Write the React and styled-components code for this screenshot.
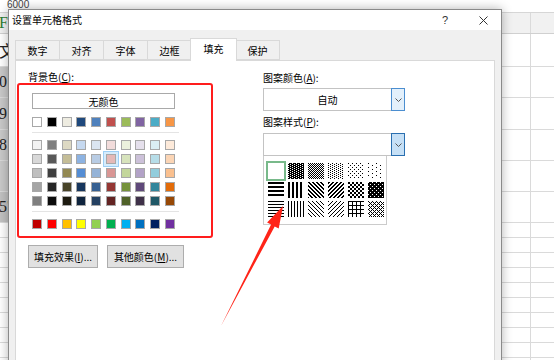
import React from 'react';
import styled, { createGlobalStyle } from 'styled-components';

const GlobalStyle = createGlobalStyle`
  html, body { margin: 0; padding: 0; }
  body { font-family: "Noto Sans CJK SC", "Noto Sans", sans-serif; background: #fff; }
`;

const Page = styled.div`
  position: relative;
  width: 554px;
  height: 360px;
  overflow: hidden;
  background: #fff;
`;

/* ---------- spreadsheet behind the dialog ---------- */
const Sheet = styled.div`
  display: flex;
  flex-direction: column;
`;
const FormulaBar = styled.div`
  height: 13px;
  box-sizing: border-box;
  border-bottom: 1px solid #d6d6d6;
  padding-left: 7px;
  font-family: "Liberation Sans", sans-serif;
  font-size: 10px;
  line-height: 10px;
  color: #444;
`;
const SheetRow = styled.div`
  display: flex;
  height: ${p => p.$h}px;
  box-sizing: border-box;
  border-bottom: 1px solid ${p => p.$line || '#dadada'};
`;
const FirstCell = styled.div`
  width: 60px;
  background: ${p => p.$fill || '#fff'};
  font-family: "Liberation Serif", "Noto Sans CJK SC", serif;
  font-size: 16px;
  color: ${p => p.$color || '#222'};
  display: flex;
  align-items: center;
  text-indent: -1px;
  white-space: nowrap;
  overflow: hidden;
`;
const MiddleCell = styled.div`
  width: 469px;
  border-left: 1px solid #dadada;
  background: ${p => p.$fill || '#fff'};
`;
const LastCell = styled.div`
  flex: 1;
  border-left: 1px solid #dadada;
  background: ${p => p.$fill || '#fff'};
`;

const sheetRows = [
  { h: 21, fill: '#f1f1f1', rfill: '#f1f1f1', text: 'F', color: '#2e7d32', line: '#d0d0d0' },
  { h: 33, text: '文' },
  { h: 31, fill: '#c9c9c9', text: '0' },
  { h: 32, fill: '#c9c9c9', text: '9' },
  { h: 31, fill: '#c9c9c9', text: '8' },
  { h: 31, fill: '#c9c9c9', text: '' },
  { h: 31, fill: '#c2c2c2', text: '57' },
  ...Array.from({ length: 10 }, () => ({ h: 15 })),
];

/* ---------- dialog window ---------- */
const Dialog = styled.div`
  position: absolute;
  left: 8px;
  top: 9px;
  width: 494px;
  height: 400px;
  box-sizing: border-box;
  border: 1px solid #8a8a8a;
  background: #f0f0f0;
  box-shadow: 0 0 10px rgba(0, 0, 0, 0.3);
  display: flex;
  flex-direction: column;
  font-size: 10px;
  color: #000;
`;
const TitleBar = styled.div`
  height: 20px;
  background: #fff;
  display: flex;
  align-items: center;
  padding-left: 3px;
`;
const Title = styled.div`
  flex: 1;
  font-size: 10px;
  line-height: 12px;
`;
const TitleButton = styled.div`
  width: ${p => p.$w}px;
  height: 20px;
  display: flex;
  align-items: center;
  justify-content: center;
  font-family: "Liberation Sans", sans-serif;
  font-size: 11px;
  color: #333;
`;
const Body = styled.div`
  flex: 1;
  display: flex;
  flex-direction: column;
  padding: 8px 6px 0 6px;
`;
const TabRow = styled.div`
  display: flex;
  align-items: flex-start;
  height: 22px;
`;
const Tab = styled.div`
  width: ${p => (p.$active ? 47 : 45)}px;
  height: ${p => (p.$active ? 23 : 20)}px;
  margin-top: ${p => (p.$active ? 0 : 2)}px;
  margin-left: ${p => (p.$first ? 0 : p.$active ? -2 : -1)}px;
  margin-right: ${p => (p.$active ? -1 : 0)}px;
  box-sizing: border-box;
  border: 1px solid #d9d9d9;
  border-bottom: ${p => (p.$active ? 'none' : '1px solid #d9d9d9')};
  background: ${p => (p.$active ? '#fff' : '#f0f0f0')};
  position: relative;
  z-index: ${p => (p.$active ? 2 : 1)};
  display: flex;
  align-items: center;
  justify-content: center;
  padding-bottom: ${p => (p.$active ? 3 : 0)}px;
  font-size: 10px;
`;
const Panel = styled.div`
  flex: 1;
  width: 480px;
  box-sizing: border-box;
  border: 1px solid #d9d9d9;
  background: #fff;
  display: flex;
  align-items: flex-start;
`;

/* ---------- left: background colour ---------- */
const LeftCol = styled.div`
  margin-left: 1px;
  width: 196px;
  padding-top: 9px;
  display: flex;
  flex-direction: column;
`;
const Label = styled.div`
  padding-left: ${p => p.$indent || 0}px;
  margin-top: ${p => p.$mt || 0}px;
  font-size: 10px;
  line-height: 13px;
  height: 13px;
  white-space: nowrap;
`;
const RedBox = styled.div`
  width: 196px;
  height: 155px;
  box-sizing: border-box;
  border: 2px solid #ff1d1d;
  border-radius: 3px;
  padding: 8px 0 0 13px;
  display: flex;
  flex-direction: column;
`;
const NoColorButton = styled.div`
  width: 143px;
  height: 16px;
  box-sizing: border-box;
  border: 1px solid #a9a9a9;
  background: #fff;
  display: flex;
  align-items: center;
  justify-content: center;
  font-size: 10px;
`;
const SwatchRow = styled.div`
  width: 143px;
  display: flex;
  justify-content: space-between;
  margin-top: ${p => p.$mt || 0}px;
`;
const SwatchGrid = styled.div`
  display: flex;
  flex-direction: column;
  gap: 4px;
  margin-top: 7px;
`;
const Swatch = styled.div`
  width: 10px;
  height: 10px;
  box-sizing: border-box;
  border: 1px solid #a8a8a8;
  background: ${p => p.$c};
  box-shadow: ${p => (p.$sel ? '0 0 0 2px #d6ecfc, 0 0 0 3px #9dcff5' : 'none')};
`;
const Divider = styled.div`
  width: 147px;
  height: 1px;
  background: #e4e4e4;
  margin-top: 5px;
`;
const ButtonRow = styled.div`
  display: flex;
  gap: 9px;
  margin-top: 7px;
  padding-left: 11px;
`;
const PushButton = styled.div`
  width: ${p => p.$w}px;
  height: 23px;
  box-sizing: border-box;
  border: 1px solid #adadad;
  background: #e1e1e1;
  display: flex;
  align-items: center;
  justify-content: center;
  font-size: 10px;
  white-space: nowrap;
`;

/* ---------- right: pattern ---------- */
const RightCol = styled.div`
  margin-left: 50px;
  width: 142px;
  padding-top: 10px;
  display: flex;
  flex-direction: column;
  align-items: flex-start;
`;
const Combo = styled.div`
  width: 142px;
  height: 23px;
  margin-top: ${p => p.$mt}px;
  box-sizing: border-box;
  border: 1px solid #c3c3c3;
  background: #fff;
  display: flex;
  position: relative;
  z-index: 1;
`;
const ComboText = styled.div`
  flex: 1;
  display: flex;
  align-items: center;
  justify-content: center;
  font-size: 10px;
`;
const DropButton = styled.div`
  width: 14px;
  margin: -1px -1px -1px 0;
  box-sizing: border-box;
  border: 1px solid ${p => (p.$pressed ? '#2a6fb0' : '#4b8ed0')};
  background: ${p => (p.$pressed ? '#c6e0f6' : '#e3f0fb')};
  display: flex;
  align-items: center;
  justify-content: center;
`;
const PatternList = styled.div`
  width: 124px;
  height: 70px;
  margin-top: -1px;
  box-sizing: border-box;
  border: 1px solid #cbcbcb;
  background: #fff;
  padding: 7px 0 0 4px;
  display: grid;
  grid-template-columns: repeat(6, 16px);
  grid-auto-rows: 16px;
  column-gap: 4px;
  row-gap: 3px;
`;
const PatternCell = styled.div`
  width: 16px;
  height: 16px;
  box-shadow: ${p => (p.$sel ? '0 0 0 2px #78b98a' : 'none')};
  svg { display: block; }
`;

const ArrowLayer = styled.svg`
  position: absolute;
  left: 0;
  top: 0;
  pointer-events: none;
  z-index: 10;
`;

/* ---------- data ---------- */
const themeRow = ['#ffffff', '#000000', '#eeece1', '#1f497d', '#4f81bd', '#c0504d', '#9bbb59', '#8064a2', '#4bacc6', '#f79646'];
const tintRows = [
  ['#f2f2f2', '#7f7f7f', '#ddd9c3', '#c6d9f0', '#dbe5f1', '#f2dcdb', '#ebf1dd', '#e5e0ec', '#dbeef3', '#fdeada'],
  ['#d8d8d8', '#595959', '#c4bd97', '#8db3e2', '#b8cce4', '#e5b9b7', '#d7e3bc', '#ccc1d9', '#b7dde8', '#fbd5b5'],
  ['#bfbfbf', '#3f3f3f', '#938953', '#548dd4', '#95b3d7', '#d99694', '#c3d69b', '#b2a2c7', '#92cddc', '#fac08f'],
  ['#a5a5a5', '#262626', '#494429', '#17365d', '#366092', '#953734', '#76923c', '#5f497a', '#31859b', '#e36c09'],
  ['#7f7f7f', '#0c0c0c', '#1d1b10', '#0f243e', '#244061', '#632423', '#4f6128', '#3f3149', '#205867', '#974806'],
];
const standardRow = ['#c00000', '#ff0000', '#ffc000', '#ffff00', '#92d050', '#00b050', '#00b0f0', '#0070c0', '#002060', '#7030a0'];

const patterns = [
  { tw: 1, th: 1, f: () => false },
  { tw: 4, th: 2, f: (x, y) => !((x === 0 && y === 0) || (x === 2 && y === 1)) },
  { tw: 2, th: 2, f: (x, y) => (x + y) % 2 === 0 },
  { tw: 4, th: 2, f: (x, y) => (x === 0 && y === 0) || (x === 2 && y === 1) },
  { tw: 4, th: 4, f: (x, y) => (x === 0 && y === 0) || (x === 2 && y === 2) },
  { tw: 8, th: 4, f: (x, y) => (x === 0 && y === 0) || (x === 4 && y === 2) },
  { tw: 1, th: 4, f: (x, y) => y < 2 },
  { tw: 4, th: 1, f: x => x < 2 },
  { tw: 4, th: 4, f: (x, y) => (((x - y) % 4) + 4) % 4 < 2 },
  { tw: 4, th: 4, f: (x, y) => (x + y) % 4 < 2 },
  { tw: 4, th: 4, f: (x, y) => ((x >> 1) + (y >> 1)) % 2 === 0 },
  { tw: 4, th: 4, f: (x, y) => !((x === 0 && y === 0) || (x === 2 && y === 2)) },
  { tw: 1, th: 3, f: (x, y) => y === 0 },
  { tw: 3, th: 1, f: x => x === 0 },
  { tw: 4, th: 4, f: (x, y) => (((x - y) % 4) + 4) % 4 === 0 },
  { tw: 4, th: 4, f: (x, y) => (x + y) % 4 === 0 },
  { tw: 4, th: 4, f: (x, y) => x % 4 === 0 || y % 4 === 0 },
  { tw: 4, th: 4, f: (x, y) => (x + y) % 4 === 0 || (((x - y) % 4) + 4) % 4 === 0 },
];

function PatternIcon({ idx, p }) {
  const id = `pat${idx}`;
  const pixels = [];
  for (let y = 0; y < p.th; y++) {
    for (let x = 0; x < p.tw; x++) {
      if (p.f(x, y)) pixels.push(<rect key={`${x}-${y}`} x={x} y={y} width="1" height="1" fill="#000" />);
    }
  }
  return (
    <svg width="16" height="16" viewBox="0 0 16 16" shapeRendering="crispEdges">
      <defs>
        <pattern id={id} width={p.tw} height={p.th} patternUnits="userSpaceOnUse">
          <rect width={p.tw} height={p.th} fill="#fff" />
          {pixels}
        </pattern>
      </defs>
      <rect width="16" height="16" fill={`url(#${id})`} />
    </svg>
  );
}

function Chevron() {
  return (
    <svg width="7" height="4" viewBox="0 0 7 4">
      <polyline points="0.5,0.5 3.5,3.5 6.5,0.5" fill="none" stroke="#555" strokeWidth="1" />
    </svg>
  );
}

const tabs = ['数字', '对齐', '字体', '边框', '填充', '保护'];

export default function App() {
  return (
    <Page>
      <GlobalStyle />
      <Sheet>
        <FormulaBar>6000</FormulaBar>
        {sheetRows.map((r, i) => (
          <SheetRow key={i} $h={r.h} $line={r.line}>
            <FirstCell $fill={r.fill} $color={r.color}>{r.text}</FirstCell>
            <MiddleCell $fill={r.rfill} />
            <LastCell $fill={r.rfill} />
          </SheetRow>
        ))}
      </Sheet>

      <Dialog>
        <TitleBar>
          <Title>设置单元格格式</Title>
          <TitleButton $w={40}>?</TitleButton>
          <TitleButton $w={36}>
            <svg width="9" height="9" viewBox="0 0 9 9">
              <path d="M0.5 0.5 L8.5 8.5 M8.5 0.5 L0.5 8.5" stroke="#333" strokeWidth="1" />
            </svg>
          </TitleButton>
        </TitleBar>
        <Body>
          <TabRow>
            {tabs.map((t, i) => (
              <Tab key={t} $first={i === 0} $active={i === 4}>{t}</Tab>
            ))}
          </TabRow>
          <Panel>
            <LeftCol>
              <Label $indent={11}>背景色(<u>C</u>):</Label>
              <RedBox>
                <NoColorButton>无颜色</NoColorButton>
                <SwatchRow $mt={8}>
                  {themeRow.map((c, i) => <Swatch key={i} $c={c} />)}
                </SwatchRow>
                <Divider />
                <SwatchGrid>
                  {tintRows.map((row, r) => (
                    <SwatchRow key={r}>
                      {row.map((c, i) => <Swatch key={i} $c={c} $sel={r === 1 && i === 5} />)}
                    </SwatchRow>
                  ))}
                </SwatchGrid>
                <Divider />
                <SwatchRow $mt={7}>
                  {standardRow.map((c, i) => <Swatch key={i} $c={c} />)}
                </SwatchRow>
              </RedBox>
              <ButtonRow>
                <PushButton $w={70}>填充效果(<u>I</u>)...</PushButton>
                <PushButton $w={77}>其他颜色(<u>M</u>)...</PushButton>
              </ButtonRow>
            </LeftCol>

            <RightCol>
              <Label>图案颜色(<u>A</u>):</Label>
              <Combo $mt={4}>
                <ComboText>自动</ComboText>
                <DropButton><Chevron /></DropButton>
              </Combo>
              <Label $mt={4}>图案样式(<u>P</u>):</Label>
              <Combo $mt={5}>
                <ComboText />
                <DropButton $pressed><Chevron /></DropButton>
              </Combo>
              <PatternList>
                {patterns.map((p, i) => (
                  <PatternCell key={i} $sel={i === 0}>
                    <PatternIcon idx={i} p={p} />
                  </PatternCell>
                ))}
              </PatternList>
            </RightCol>
          </Panel>
        </Body>
      </Dialog>

      <ArrowLayer width="554" height="360" viewBox="0 0 554 360">
        <polygon
          points="221,326 271.1,224.6 267.1,222.5 283,206 278.7,228.5 274.7,226.4"
          fill="#ff2418"
        />
      </ArrowLayer>
    </Page>
  );
}
